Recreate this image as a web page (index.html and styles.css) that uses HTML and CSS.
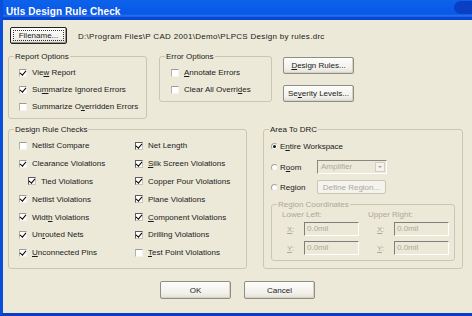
FILE: index.html
```
<!DOCTYPE html>
<html>
<head>
<meta charset="utf-8">
<link rel="stylesheet" href="styles.css">
</head>
<body>
<div class="window">
  <div class="titlebar">
    <span class="title">Utls Design Rule Check</span>
    <span class="tb-blob"></span>
  </div>
  <div class="body">
    <div class="row1">
      <button class="btn default"><span class="focus">Filename...</span></button>
      <span class="path">D:\Program Files\P CAD 2001\Demo\PLPCS Design by rules.drc</span>
    </div>

    <div class="row2">
      <div class="group report">
        <div class="gtitle">Report Options</div>
        <div class="checks">
          <div class="chk"><span class="cb on"></span><span>Vie<u>w</u> Report</span></div>
          <div class="chk"><span class="cb on"></span><span>Su<u>m</u>marize Ignored Errors</span></div>
          <div class="chk"><span class="cb"></span><span>Summarize O<u>v</u>erridden Errors</span></div>
        </div>
      </div>
      <div class="group error">
        <div class="gtitle">Error Options</div>
        <div class="checks">
          <div class="chk"><span class="cb"></span><span><u>A</u>nnotate Errors</span></div>
          <div class="chk"><span class="cb"></span><span>Clear All Overri<u>d</u>es</span></div>
        </div>
      </div>
      <div class="btncol">
        <button class="btn side"><u>D</u>esign Rules...</button>
        <button class="btn side">Se<u>v</u>erity Levels...</button>
      </div>
    </div>

    <div class="row3">
      <div class="group drc">
        <div class="gtitle">Design Rule Checks</div>
        <div class="drc-grid">
          <div class="chk"><span class="cb"></span><span>Netlist Compare</span></div>
          <div class="chk"><span class="cb on dark"></span><span>Net Length</span></div>
          <div class="chk"><span class="cb on"></span><span>Clearance Violations</span></div>
          <div class="chk"><span class="cb on dark"></span><span><u>S</u>ilk Screen Violations</span></div>
          <div class="chk indent"><span class="cb on dark"></span><span>Tied Violations</span></div>
          <div class="chk"><span class="cb on dark"></span><span>Copper Pour Violations</span></div>
          <div class="chk"><span class="cb on"></span><span>Netlist Violations</span></div>
          <div class="chk"><span class="cb on dark"></span><span>Plane Violations</span></div>
          <div class="chk"><span class="cb on"></span><span>Widt<u>h</u> Violations</span></div>
          <div class="chk"><span class="cb on dark"></span><span><u>C</u>omponent Violations</span></div>
          <div class="chk"><span class="cb on"></span><span>Un<u>r</u>outed Nets</span></div>
          <div class="chk"><span class="cb on dark"></span><span>Drilling Violations</span></div>
          <div class="chk"><span class="cb on"></span><span><u>U</u>nconnected Pins</span></div>
          <div class="chk"><span class="cb"></span><span><u>T</u>est Point Violations</span></div>
        </div>
      </div>

      <div class="group area">
        <div class="gtitle">Area To DRC</div>
        <div class="rad-row first">
          <span class="rb on"></span><span class="rlabel">E<u>n</u>tire Workspace</span>
        </div>
        <div class="rad-row">
          <span class="rb"></span><span class="rlabel fixed">R<u>o</u>om</span>
          <span class="combo"><span class="combo-text">Amplifier</span><span class="combo-btn"><span class="arrow"></span></span></span>
        </div>
        <div class="rad-row">
          <span class="rb"></span><span class="rlabel fixed">Re<u>g</u>ion</span>
          <button class="btn small disabled">Define Region...</button>
        </div>
        <div class="group coords">
          <div class="gtitle dis">Region Coordinates</div>
          <div class="coord-grid">
            <div class="ccol c1">
              <div class="chead">Lower Left:</div>
              <div class="crow"><span class="xl"><u>X</u>:</span><span class="inp">0.0mil</span></div>
              <div class="crow"><span class="xl"><u>Y</u>:</span><span class="inp">0.0mil</span></div>
            </div>
            <div class="ccol c2">
              <div class="chead">Upper Right:</div>
              <div class="crow"><span class="xl"><u>X</u>:</span><span class="inp">0.0mil</span></div>
              <div class="crow"><span class="xl"><u>Y</u>:</span><span class="inp">0.0mil</span></div>
            </div>
          </div>
        </div>
      </div>
    </div>

    <div class="row4">
      <button class="btn dlg">OK</button>
      <button class="btn dlg">Cancel</button>
    </div>
  </div>
</div>
</body>
</html>
```
FILE: styles.css
```
* { box-sizing: border-box; }
html, body {
  margin: 0;
  padding: 0;
  width: 472px;
  height: 316px;
  overflow: hidden;
  background: #ece9d8;
}
body {
  font-family: "Liberation Sans", Arial, sans-serif;
  font-size: 8px;
  color: #1a1a1a;
}
u { text-decoration: underline; text-underline-offset: 1px; }

.window {
  width: 472px;
  height: 316px;
  border-left: 3px solid #0a4fdc;
  border-bottom: 3px solid #0c3cc2;
  background: #ece9d8;
  display: flex;
  flex-direction: column;
}

.titlebar {
  height: 20px;
  flex: none;
  background: linear-gradient(#0d62ea 0%, #0858e6 70%, #2f73ef 80%, #0a4ad6 86%, #0844cc 100%);
  display: flex;
  align-items: center;
  justify-content: space-between;
}
.title {
  color: #fff;
  font-weight: bold;
  font-size: 10px;
  margin-left: 3px;
  padding-top: 2px;
  letter-spacing: 0.1px;
}
.tb-blob {
  width: 18px;
  height: 13px;
  margin-bottom: 6px;
  border-radius: 8px 0 0 8px;
  background: #0a3fc4;
}

.body {
  padding: 7px 0 0 5px;
  display: flex;
  flex-direction: column;
}

/* buttons */
.btn {
  font-family: inherit;
  font-size: 8px;
  color: #1a1a1a;
  padding: 0;
  margin: 0;
  border: 1px solid #8f8d84;
  border-radius: 2px;
  background: linear-gradient(#fdfdfb, #f1f0ea 70%, #e2e0d6);
  box-shadow: inset -1px -1px 0 #d6d3c6;
  display: flex;
  align-items: center;
  justify-content: center;
}
.btn.default {
  width: 57px;
  height: 17px;
  border: 1px solid #222;
  box-shadow: inset -1px -1px 0 #9a988e;
}
.focus {
  border: 1px dotted #333;
  padding: 0 5px;
  line-height: 9px;
}

.row1 {
  display: flex;
  align-items: center;
  height: 17px;
  margin-left: 2px;
}
.path {
  margin-left: 11px;
  padding-top: 1px;
  letter-spacing: 0.3px;
}

/* group boxes */
.group {
  border: 1px solid #c9c6b6;
  border-radius: 3px;
  display: flex;
  flex-direction: column;
}
.gtitle {
  margin-top: -5px;
  margin-left: 5px;
  padding: 0 1px;
  line-height: 9px;
  background: #ece9d8;
  width: fit-content;
}
.gtitle.dis { color: #aca899; }

.row2 {
  display: flex;
  align-items: flex-start;
  margin-top: 12px;
}
.report { width: 139px; height: 63px; }
.error { width: 113px; height: 46px; margin-left: 12px; }
.checks { margin-top: 3px; padding-left: 10px; }
.error .checks { padding-left: 11px; }

.chk {
  display: flex;
  align-items: center;
  height: 17px;
}
.cb {
  width: 8px;
  height: 8px;
  flex: none;
  margin-right: 5px;
  background: #fff;
  border-top: 1px solid #9c9a92;
  border-left: 1px solid #b4b2a8;
  border-right: 1px solid #f4f3ee;
  border-bottom: 1px solid #f4f3ee;
  display: flex;
  align-items: center;
  justify-content: center;
}
.cb.dark {
  border-top: 1px solid #5c5b56;
  border-left: 1px solid #5c5b56;
  border-right: 1px solid #c8c6bc;
  border-bottom: 1px solid #c8c6bc;
}
.cb.on::after {
  content: "";
  width: 2.5px;
  height: 5px;
  border-right: 1.6px solid #000;
  border-bottom: 1.6px solid #000;
  transform: rotate(40deg);
  margin-top: -2px;
}

.btncol {
  display: flex;
  flex-direction: column;
  gap: 11px;
  margin-left: 11px;
  margin-top: 1px;
}
.btn.side { width: 71px; height: 17px; }

/* row3 */
.row3 {
  display: flex;
  align-items: flex-start;
  margin-top: 10px;
}
.drc { width: 239px; height: 140px; }
.drc-grid {
  display: grid;
  grid-template-columns: 116px auto;
  grid-auto-rows: 17.8px;
  padding-left: 10px;
  margin-top: 3px;
}
.drc-grid .chk { height: 17.8px; }
.chk.indent { padding-left: 9px; }

.area { width: 200px; height: 140px; margin-left: 16px; }
.rad-row {
  display: flex;
  align-items: center;
  height: 18px;
  padding-left: 7px;
  margin-top: 2px;
}
.rad-row.first { margin-top: 3px; margin-bottom: 1px; }
.rb {
  width: 7px;
  height: 7px;
  flex: none;
  border-radius: 50%;
  background: #fff;
  border: 1px solid #a6a49a;
  border-bottom-color: #e8e6dc;
  border-right-color: #e8e6dc;
  display: flex;
  align-items: center;
  justify-content: center;
  margin-right: 2px;
}
.rb.on::after {
  content: "";
  width: 3px;
  height: 3px;
  border-radius: 50%;
  background: #111;
}
.rlabel.fixed { width: 37px; }

.combo {
  width: 70px;
  height: 14px;
  border-top: 1px solid #8a887e;
  border-left: 1px solid #8a887e;
  border-right: 1px solid #fff;
  border-bottom: 1px solid #fff;
  display: flex;
  align-items: stretch;
  color: #aca899;
}
.combo-text { flex: 1; padding-left: 3px; line-height: 12px; }
.combo-btn {
  width: 10px;
  margin: 1px;
  border: 1px solid #d2cfc2;
  background: #f3f2ec;
  display: flex;
  align-items: center;
  justify-content: center;
}
.arrow {
  width: 0;
  height: 0;
  border-left: 2px solid transparent;
  border-right: 2px solid transparent;
  border-top: 2px solid #aca899;
}
.btn.small { width: 69px; height: 14px; }
.btn.disabled {
  color: #aca899;
  border-color: #c9c6b6;
  background: #f4f3ee;
  box-shadow: none;
}

.coords {
  width: 184px;
  height: 57px;
  margin-left: 7px;
  margin-top: 8px;
}
.coord-grid {
  display: grid;
  grid-template-columns: 86px auto;
  padding-left: 10px;
  color: #aca899;
}
.chead { line-height: 9px; margin-top: 1px; }
.crow {
  display: flex;
  align-items: center;
  height: 14px;
  margin-top: 3px;
}
.crow + .crow { margin-top: 5px; }
.c1 .crow { padding-left: 5px; }
.c2 .crow { padding-left: 9px; }
.xl { width: 17px; }
.inp {
  width: 55px;
  height: 14px;
  border-top: 1px solid #7f7e78;
  border-left: 1px solid #7f7e78;
  border-right: 1px solid #fff;
  border-bottom: 1px solid #fff;
  padding-left: 2px;
  line-height: 12px;
}

/* row4 */
.row4 {
  display: flex;
  gap: 13px;
  margin-top: 12px;
  padding-left: 152px;
}
.btn.dlg { width: 71px; height: 18px; }
```
